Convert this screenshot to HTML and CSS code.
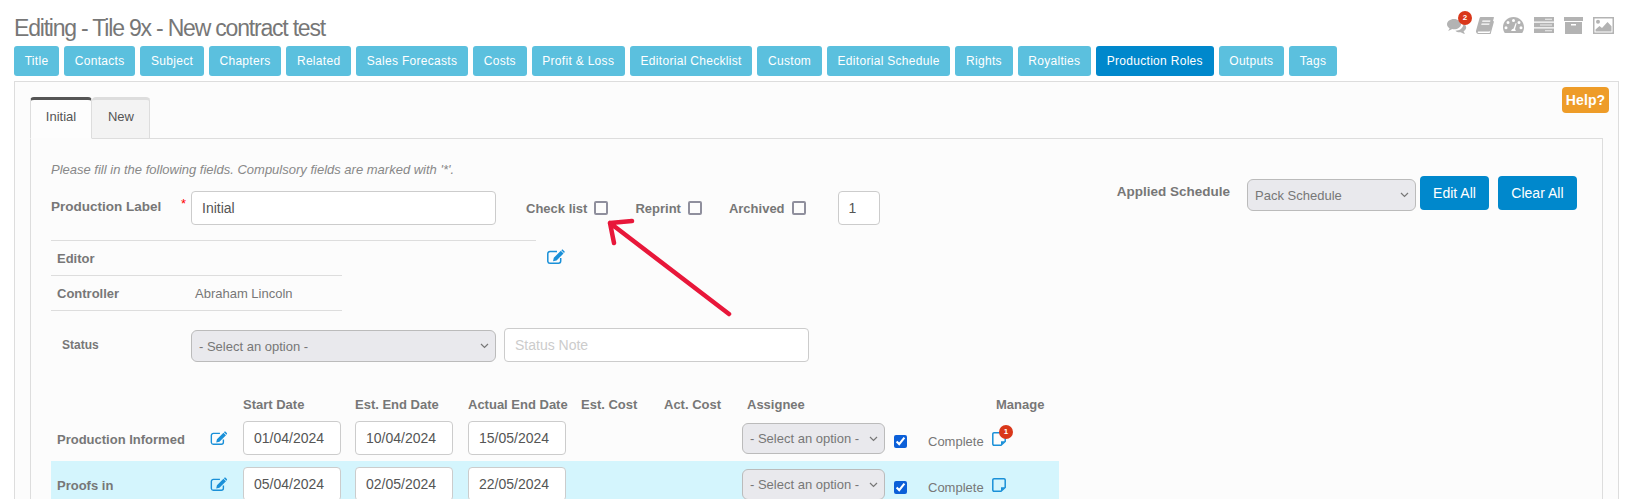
FILE: index.html
```html
<!DOCTYPE html>
<html lang="en">
<head>
<meta charset="utf-8">
<title>Editing - Tile 9x</title>
<link rel="stylesheet" href="styles.css">
</head>
<body>
<header class="head">
  <h1 class="title">Editing - Tile 9x - New contract test</h1>
  <div class="tools">
    <span class="tool tool-chat tool-tight">
      <svg width="20" height="16" viewBox="0 0 20 16"><path fill="#b3b3b3" d="M7 1C3.2 1 0 3.3 0 6.2c0 1.700 1 3.100 2.600 4.100-.2.900-.8 1.700-1.500 2.400 1.500-.1 3-.7 4.100-1.600.6.100 1.200.2 1.800.2 3.900 0 7-2.300 7-5.100S10.900 1 7 1z"/><path fill="#b3b3b3" d="M16 5.500c.2.500.2.900.2 1.300 0 3.400-3.500 5.900-7.800 6 1 1 2.500 1.500 4 1.500.5 0 1 0 1.400-.1 1 .8 2.700 1.500 4.200 1.500-.6-.7-1.200-1.500-1.400-2.400 1.600-.9 2.600-2.300 2.600-3.800 0-1.500-1-2.900-3.200-4z"/></svg>
      <b class="badge badge-chat">2</b>
    </span>
    <svg class="tool tool-tight" width="18" height="17" viewBox="0 0 18 17"><path fill="#b3b3b3" d="M5 0h12.500c.4 0 .5.300.4.700L14.500 13c-.3 1-1 1.500-2 1.500H2.400c-.5 0-.8.700-.7 1 .1.300.3.500.7.500h11.300l3.300-12 1 .6-3.400 12.400H2.400C1 17 .2 16 0 14.800c0-.4 0-.800.100-1.200L3.500 1.300C3.700.5 4.300 0 5 0zm1.500 3.500-.4 1.300h8l.4-1.300zm-.9 3-.4 1.300h8l.4-1.300z"/></svg>
    <svg class="tool" width="21" height="16" viewBox="0 0 21 16"><path fill="#b3b3b3" fill-rule="evenodd" d="M10.500 0C4.700 0 0 4.600 0 10.300c0 2 .6 3.900 1.600 5.400.2.200.4.300.6.300h16.600c.2 0 .4-.1.600-.3 1-1.500 1.600-3.400 1.600-5.400C21 4.600 16.300 0 10.500 0zM10.500 2a1.500 1.500 0 1 1 0 3 1.500 1.500 0 0 1 0-3zM5 4a1.500 1.500 0 1 1 0 3 1.500 1.500 0 0 1 0-3zm11 0a1.500 1.500 0 1 1 0 3 1.500 1.500 0 0 1 0-3zM3 9.200a1.500 1.500 0 1 1 0 3 1.500 1.500 0 0 1 0-3zm15 0a1.500 1.500 0 1 1 0 3 1.500 1.500 0 0 1 0-3zM12.700 6l.9.400-1.600 5.900c.5.400.8 1 .8 1.700H8.200c0-1.300 1-2.300 2.300-2.300z"/></svg>
    <svg class="tool" width="20" height="16" viewBox="0 0 20 16"><path fill="#b3b3b3" d="M0 0h20v4.500H0zM0 5.700h20v4.500H0zM0 11.400h20V16H0z"/><path fill="#efefef" d="M11 1.700h7v1h-7zM6 7.400h12v1H6zM11 13.200h7v1h-7z"/></svg>
    <svg class="tool" width="19" height="17" viewBox="0 0 19 17"><path fill="#b3b3b3" fill-rule="evenodd" d="M0 0h19v4H0zM1 5h17v12H1zM7 7v1.500h5V7z"/></svg>
    <svg class="tool" width="21" height="17" viewBox="0 0 21 17"><path fill="#b3b3b3" fill-rule="evenodd" d="M0 0h21v17H0zM1.500 1.500v14h18v-14z"/><circle fill="#b3b3b3" cx="5" cy="4.800" r="2"/><path fill="#b3b3b3" d="M2.500 14.500v-2l4-3.500 2.500 2 5.500-6 4 4.300v5.200z"/></svg>
  </div>
</header>

<nav class="nav">
  <a class="nav-btn">Title</a>
  <a class="nav-btn">Contacts</a>
  <a class="nav-btn">Subject</a>
  <a class="nav-btn">Chapters</a>
  <a class="nav-btn">Related</a>
  <a class="nav-btn">Sales Forecasts</a>
  <a class="nav-btn">Costs</a>
  <a class="nav-btn">Profit &amp; Loss</a>
  <a class="nav-btn">Editorial Checklist</a>
  <a class="nav-btn">Custom</a>
  <a class="nav-btn">Editorial Schedule</a>
  <a class="nav-btn">Rights</a>
  <a class="nav-btn">Royalties</a>
  <a class="nav-btn nav-active">Production Roles</a>
  <a class="nav-btn">Outputs</a>
  <a class="nav-btn">Tags</a>
</nav>

<main class="panel">
  <a class="help">Help?</a>
  <div class="tabs">
    <a class="tab tab-active">Initial</a>
    <a class="tab">New</a>
  </div>
  <section class="pane">
    <p class="intro">Please fill in the following fields. Compulsory fields are marked with '*'.</p>

    <div class="form-row">
      <div class="label-cell">
        <span class="label-lg">Production Label</span>
        <span class="star">*</span>
      </div>
      <input class="field field-main" type="text" value="Initial">
      <span class="label-sm first-check">Check list</span>
      <input class="box" type="checkbox">
      <span class="label-sm next-check">Reprint</span>
      <input class="box" type="checkbox">
      <span class="label-sm next-check">Archived</span>
      <input class="box" type="checkbox">
      <input class="field field-num" type="text" value="1">
      <div class="schedule">
        <span class="label-lg">Applied Schedule</span>
        <select class="select select-schedule"><option>Pack Schedule</option></select>
        <button class="action action-edit">Edit All</button>
        <button class="action action-clear">Clear All</button>
      </div>
    </div>

    <div class="people-wrap">
      <div class="people">
        <div class="person"><span class="person-name">Editor</span></div>
        <div class="person"><span class="person-name">Controller</span><span class="person-value">Abraham Lincoln</span></div>
      </div>
      <svg class="edit edit-people" width="18" height="15" viewBox="0 0 18 15"><use href="#edit-icon"/></svg>
    </div>

    <div class="status-row">
      <span class="status-label">Status</span>
      <select class="select select-status"><option>- Select an option -</option></select>
      <input class="field field-note" type="text" placeholder="Status Note">
    </div>

    <div class="roles">
      <div class="grid-row grid-head">
        <span></span><span></span>
        <span>Start Date</span>
        <span>Est. End Date</span>
        <span>Actual End Date</span>
        <span>Est. Cost</span>
        <span>Act. Cost</span>
        <span class="head-assignee">Assignee</span>
        <span></span><span></span>
        <span class="head-manage">Manage</span>
      </div>

      <div class="grid-row">
        <span class="role-name">Production Informed</span>
        <svg class="edit" width="18" height="14" viewBox="0 0 18 15"><use href="#edit-icon"/></svg>
        <input class="field field-date" type="text" value="01/04/2024">
        <input class="field field-date" type="text" value="10/04/2024">
        <input class="field field-date" type="text" value="15/05/2024">
        <span></span><span></span>
        <select class="select select-assignee"><option>- Select an option -</option></select>
        <input class="tick" type="checkbox" checked>
        <span class="complete">Complete</span>
        <span class="note">
          <svg width="14" height="14" viewBox="0 0 14 14"><use href="#note-icon"/></svg>
          <b class="badge badge-note">1</b>
        </span>
      </div>

      <div class="grid-row grid-row-hl">
        <span class="role-name">Proofs in</span>
        <svg class="edit" width="18" height="14" viewBox="0 0 18 15"><use href="#edit-icon"/></svg>
        <input class="field field-date" type="text" value="05/04/2024">
        <input class="field field-date" type="text" value="02/05/2024">
        <input class="field field-date" type="text" value="22/05/2024">
        <span></span><span></span>
        <select class="select select-assignee"><option>- Select an option -</option></select>
        <input class="tick" type="checkbox" checked>
        <span class="complete">Complete</span>
        <span class="note">
          <svg width="14" height="14" viewBox="0 0 14 14"><use href="#note-icon"/></svg>
        </span>
      </div>
    </div>
  </section>
</main>

<svg class="arrow" width="140" height="110" viewBox="0 0 140 110">
  <path d="M131 97 12 6M12 6l22-2M12 6l4 20" fill="none" stroke="#e8173a" stroke-width="4.500" stroke-linecap="round" stroke-linejoin="round"/>
</svg>

<svg class="defs" width="0" height="0">
  <defs>
    <g id="edit-icon">
      <path fill="none" stroke="#1a90d8" stroke-width="1.500" d="M10 2.500H3a2.200 2.200 0 0 0-2.200 2.200v7.600A2.200 2.200 0 0 0 3 14.200h8.500a2.200 2.200 0 0 0 2.200-2.200V9"/>
      <path fill="#1a90d8" d="M13.800 1.800 16.500 4.500 9.500 11.500 6 12.300 6.800 8.800zM14.700.9c.4-.4 1-.4 1.400 0l1.300 1.300c.4.400.4 1 0 1.400l-.4.400-2.700-2.700z"/>
    </g>
    <g id="note-icon">
      <path fill="none" stroke="#1a90d8" stroke-width="1.500" d="M2 .8h10A1.200 1.200 0 0 1 13.200 2v7.500L9 13.200H2A1.200 1.200 0 0 1 .8 12V2A1.200 1.200 0 0 1 2 .8z"/>
      <path fill="#1a90d8" d="M9 13V9.200h4z"/>
    </g>
  </defs>
</svg>
</body>
</html>
```

FILE: styles.css
```css
* { box-sizing: border-box; }

html, body {
  margin: 0;
  height: 499px;
  overflow: hidden;
  background: #fff;
}

body {
  position: relative;
  padding: 0 6px 0 14px;
  font-family: "Liberation Sans", Arial, sans-serif;
  color: #777;
}

.head {
  display: flex;
  justify-content: space-between;
  height: 46px;
}

.title {
  margin: 15px 0 0;
  font-size: 23px;
  line-height: 26px;
  font-weight: 400;
  letter-spacing: -1.2px;
  color: #777;
}

.tools {
  display: flex;
  align-items: flex-start;
  gap: 10px;
  padding: 17px 5px 0 0;
}

.tool { display: block; }
.tool-tight { margin-right: -1px; }
.tool-chat { position: relative; margin-top: 1px; height: 16px; }

.badge {
  position: absolute;
  display: block;
  width: 14px;
  height: 14px;
  border-radius: 50%;
  background: #d9371a;
  color: #fff;
  font-size: 8px;
  line-height: 14px;
  font-weight: 700;
  text-align: center;
}

.badge-chat { top: -7px; left: 11px; }
.badge-note { top: -7px; left: 7px; }

.nav {
  display: flex;
  gap: 5px;
  height: 30px;
  margin-bottom: 5px;
}

.nav-btn {
  display: block;
  padding: 0 10.7px;
  border-radius: 3px;
  background: #5bc0de;
  color: #fff;
  font-size: 12px;
  line-height: 30px;
  letter-spacing: 0.3px;
  white-space: nowrap;
}

.nav-active { background: #0088cc; }

.panel {
  position: relative;
  height: 500px;
  padding: 15px 15px 0 15px;
  border: 1px solid #ddd;
  background: #fcfcfc;
}

.help {
  position: absolute;
  top: 5px;
  right: 9px;
  width: 47px;
  height: 26px;
  border-radius: 4px;
  background: #ee9c28;
  color: #fff;
  font-size: 14px;
  line-height: 26px;
  font-weight: 700;
  text-align: center;
  letter-spacing: 0.1px;
}

.tabs {
  display: flex;
  height: 42px;
  margin-bottom: -1px;
}

.tab {
  position: relative;
  width: 58px;
  height: 42px;
  padding-left: 1px;
  border: 1px solid #ddd;
  border-top: 3px solid #ddd;
  border-left: 0;
  border-radius: 4px 4px 0 0;
  background: #f3f3f3;
  color: #555;
  font-size: 13px;
  line-height: 34px;
  text-align: center;
}

.tab-active {
  width: 62px;
  padding-left: 0;
  border-left: 1px solid #ddd;
  border-top-color: #555;
  border-bottom-color: #fcfcfc;
  background: #fdfdfd;
  z-index: 1;
}

.pane {
  height: 400px;
  padding: 23px 25px 0 20px;
  border: 1px solid #ddd;
}

.intro {
  margin: 0 0 13px;
  font-size: 13px;
  line-height: 16px;
  font-style: italic;
  color: #888;
}

.form-row {
  display: flex;
  align-items: center;
  height: 34px;
}

.label-cell {
  display: flex;
  justify-content: space-between;
  align-items: flex-start;
  width: 140px;
  height: 100%;
  padding: 8px 5px 0 0;
}

.label-lg {
  font-size: 13.5px;
  line-height: 16px;
  font-weight: 700;
  color: #777;
  white-space: nowrap;
}

.label-sm {
  margin-right: 7px;
  font-size: 13px;
  font-weight: 700;
  color: #777;
  white-space: nowrap;
}

.star {
  margin-top: -3px;
  color: #f00;
  font-size: 13px;
  line-height: 16px;
}

.field {
  height: 34px;
  padding: 0 10px;
  border: 1px solid #ccc;
  border-radius: 4px;
  background: #fff;
  color: #555;
  font: 14px "Liberation Sans", Arial, sans-serif;
}

.field::placeholder { color: #ccc; opacity: 1; }

.field-main { width: 305px; }
.field-num { width: 42px; margin-left: 32px; }
.field-note { width: 305px; margin-left: 8px; }
.field-date { width: 98px; }

.first-check { margin-left: 30px; }
.next-check { margin-left: 27px; }

.box {
  appearance: none;
  width: 14px;
  height: 14px;
  margin: 0;
  border: 2px solid #8f8f9d;
  border-radius: 2px;
  background: transparent;
}

.schedule {
  display: flex;
  align-items: flex-start;
  margin-left: auto;
  align-self: flex-start;
  margin-top: -15px;
}

.schedule .label-lg { margin: 8px 17px 0 0; }

.select {
  appearance: none;
  height: 32px;
  padding: 0 20px 0 7px;
  border: 1px solid #bbb;
  border-radius: 6px;
  background-color: #e9e9ed;
  background-image: url("data:image/svg+xml,%3Csvg xmlns='http://www.w3.org/2000/svg' width='9' height='6'%3E%3Cpath d='M1 1l3.500 3.500L8 1' fill='none' stroke='%23777' stroke-width='1.200'/%3E%3C/svg%3E");
  background-repeat: no-repeat;
  background-position: right 6px center;
  color: #777;
  font: 13px "Liberation Sans", Arial, sans-serif;
}

.select-schedule { width: 169px; margin-top: 3px; }
.select-status { width: 305px; }
.select-assignee { width: 143px; height: 31px; margin-top: 1px; }

.action {
  height: 34px;
  padding: 0 13px;
  border: 0;
  border-radius: 4px;
  background: #0088cc;
  color: #fff;
  font: 14px "Liberation Sans", Arial, sans-serif;
}

.action-edit { margin-left: 4px; }
.action-clear { margin-left: 9px; padding: 0 13.5px; }

.people-wrap {
  display: flex;
  align-items: flex-start;
  margin-top: 15px;
}

.people {
  width: 485px;
  border-top: 1px solid #ddd;
}

.person {
  display: flex;
  align-items: center;
  width: 291px;
  height: 35px;
  border-bottom: 1px solid #ddd;
  font-size: 13px;
}

.person-name {
  width: 144px;
  padding-left: 6px;
  font-weight: 700;
}

.edit { display: block; }
.edit-people { margin: 9px 0 0 11px; }

.status-row {
  display: flex;
  align-items: flex-end;
  margin-top: 17px;
  height: 34px;
}

.status-label {
  align-self: center;
  width: 140px;
  padding-left: 11px;
  font-size: 12px;
  font-weight: 700;
}

.roles { margin-top: 32px; width: 1008px; }

.grid-row {
  display: grid;
  grid-template-columns: 159px 33px 112px 113px 113px 83px 78px 152px 34px 64px 67px;
  align-items: center;
  height: 46px;
}

.grid-row-hl { background: #d4f5fd; }

.grid-head {
  height: 21px;
  font-size: 13px;
  font-weight: 700;
  white-space: nowrap;
}

.head-assignee { padding-left: 5px; }
.head-manage { padding-left: 4px; }

.role-name {
  padding: 2px 0 0 6px;
  font-size: 13px;
  font-weight: 700;
  white-space: nowrap;
}

.tick {
  width: 13px;
  height: 13px;
  margin: 7px 0 0;
  accent-color: #0b5fd8;
}

.complete {
  margin-top: 6px;
  font-size: 13px;
}

.note {
  position: relative;
  display: block;
  width: 14px;
  height: 14px;
  margin-top: 2px;
}

.note svg { display: block; }

.arrow {
  position: absolute;
  left: 598px;
  top: 217px;
  pointer-events: none;
}

.defs { position: absolute; }
```
